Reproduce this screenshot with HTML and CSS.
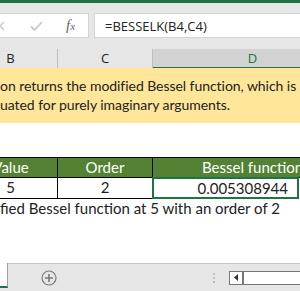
FILE: index.html
```html
<!DOCTYPE html>
<html lang="en">
<head>
    <meta charset="UTF-8">
    <title>BESSELK</title>
    <link rel="stylesheet" href="styles.css">
</head>
<body>
    <div class="app">
        <!-- Ribbon edge -->
        <div class="ribbon-edge"></div>

        <!-- Formula bar -->
        <div class="formula-bar">
            <div class="fx-box">
                <svg class="icon-cancel" width="10" height="10" viewBox="0 0 10 10">
                    <path d="M1 1 L9 9 M9 1 L1 9" stroke="#c8c8c8" stroke-width="1.4" fill="none"/>
                </svg>
                <svg class="icon-enter" width="13" height="10" viewBox="0 0 13 10">
                    <path d="M1 5.5 L4.5 9 L12 1" stroke="#c8c8c8" stroke-width="1.8" fill="none"/>
                </svg>
                <span class="fx">f<i>x</i></span>
            </div>
            <div class="formula-input">=BESSELK(B4,C4)</div>
        </div>

        <!-- Column headers -->
        <div class="col-headers">
            <div class="col-head">B</div>
            <div class="col-head">C</div>
            <div class="col-head selected">D</div>
        </div>

        <!-- Sheet -->
        <div class="sheet">
            <div class="note">
                <p>on returns the modified Bessel function, which is</p>
                <p>uated for purely imaginary arguments.</p>
            </div>
            <div class="blank-row"></div>
            <div class="tbl-row tbl-head">
                <div class="cell">Value</div>
                <div class="cell">Order</div>
                <div class="cell">Bessel function</div>
            </div>
            <div class="tbl-row tbl-data">
                <div class="cell">5</div>
                <div class="cell">2</div>
                <div class="cell active">0.005308944</div>
            </div>
            <div class="caption">fied Bessel function at 5 with an order of 2</div>
        </div>

        <!-- Sheet tabs -->
        <div class="tab-bar">
            <div class="tab-active"></div>
            <svg class="add-sheet" width="16" height="16" viewBox="0 0 16 16">
                <circle cx="8" cy="8" r="7" stroke="#7a7a7a" stroke-width="1.2" fill="none"/>
                <path d="M8 4 V12 M4 8 H12" stroke="#7a7a7a" stroke-width="1.6"/>
            </svg>
            <div class="splitter"><span></span><span></span><span></span></div>
            <div class="scrollbar">
                <div class="scroll-btn">
                    <svg width="5" height="7" viewBox="0 0 5 7"><path d="M4 0 L0 3.5 L4 7 Z" fill="#333"/></svg>
                </div>
                <div class="scroll-track"></div>
            </div>
        </div>
    </div>
</body>
</html>
```

FILE: styles.css
```css
/* General Styles */
* {
    margin: 0;
    padding: 0;
    box-sizing: border-box;
}

body {
    width: 300px;
    height: 291px;
    overflow: hidden;
    background-color: #fff;
    font-family: Lato, "Liberation Sans", sans-serif;
    color: #222;
}

.app {
    display: flex;
    flex-direction: column;
    height: 291px;
    width: 300px;
    overflow: hidden;
}

.ribbon-edge {
    height: 3px;
    background-color: #217346;
}

/* Formula bar */
.formula-bar {
    display: flex;
    gap: 5px;
    height: 46px;
    padding: 10px 0 11px;
    background-color: #e6e6e6;
}

.fx-box {
    display: flex;
    align-items: center;
    width: 89px;
    background-color: #fff;
    border: 1px solid #d4d4d4;
    border-left: none;
}

.icon-cancel {
    margin-left: -5px;
}

.icon-enter {
    margin-left: 25px;
}

.fx {
    margin-left: 23px;
    font-family: "Liberation Serif", serif;
    font-style: italic;
    font-size: 15px;
    color: #666;
}

.fx i {
    font-size: 11px;
}

.formula-input {
    flex: 1;
    background-color: #fff;
    border: 1px solid #d4d4d4;
    border-right: none;
    padding: 3px 0 0 10px;
    font-family: "Open Sans", sans-serif;
    font-size: 13px;
    color: #222;
}

/* Column headers */
.col-headers {
    display: grid;
    grid-template-columns: 94px 95px 200px;
    margin-left: -36px;
    height: 19px;
    background-color: #e6e6e6;
}

.col-head {
    text-align: center;
    font-family: "Open Sans", sans-serif;
    font-size: 13px;
    line-height: 18px;
    color: #222;
    border-right: 1px solid #bdbdbd;
    border-bottom: 1px solid #e8d9a8;
}

.col-head.selected {
    background-color: #d2d2d2;
    color: #217346;
    border-bottom: 2px solid #217346;
}

/* Sheet */
.sheet {
    flex: 1;
}

.note {
    height: 55px;
    background-color: #ffe699;
    padding-top: 8px;
    font-size: 14px;
    line-height: 19px;
    letter-spacing: -0.05px;
    white-space: nowrap;
}

.blank-row {
    height: 34px;
}

.tbl-row {
    display: grid;
    grid-template-columns: 94px 95px 200px;
    margin-left: -36px;
    height: 20px;
    font-size: 15px;
}

.tbl-row .cell {
    text-align: center;
    line-height: 19px;
    border-right: 1px solid #000;
    border-bottom: 1px solid #000;
}

.tbl-head {
    background-color: #548235;
    color: #fff;
    border-top: 1px solid #000;
    height: 21px;
}

.tbl-data .cell.active {
    border: 2px solid #217346;
    margin-left: -1px;
    margin-top: -1px;
    width: 147px;
    padding-right: 9px;
    text-align: right;
    line-height: 18px;
}

.caption {
    height: 20px;
    font-size: 15px;
    line-height: 20px;
    white-space: nowrap;
}

/* Sheet tabs */
.tab-bar {
    display: flex;
    align-items: center;
    height: 28px;
    background-color: #e6e6e6;
    border-top: 1px solid #c6c6c6;
}

.tab-active {
    align-self: stretch;
    width: 8px;
    margin-top: -1px;
    background-color: #fff;
    border-right: 1px solid #a0a0a0;
    border-bottom: 2px solid #217346;
    margin-bottom: 3px;
}

.add-sheet {
    margin-left: 33px;
}

.splitter {
    display: flex;
    flex-direction: column;
    gap: 2px;
    margin-left: 156px;
}

.splitter span {
    width: 2px;
    height: 2px;
    background-color: #c0c0c0;
}

.scrollbar {
    display: flex;
    flex: 1;
    height: 14px;
    margin-left: 14px;
    margin-right: -10px;
    border: 1px solid #777;
    background-color: #fff;
}

.scroll-btn {
    display: flex;
    align-items: center;
    justify-content: center;
    width: 14px;
    border-right: 2px solid #777;
}
```
